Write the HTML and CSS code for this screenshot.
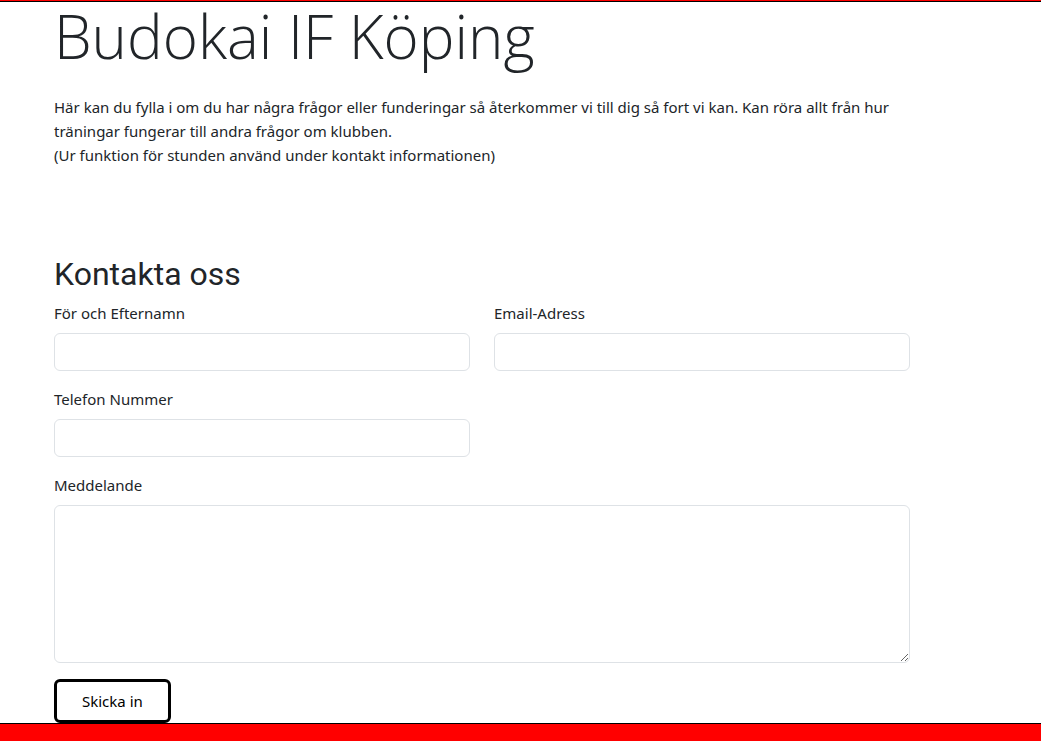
FILE: index.html
```html
<!DOCTYPE html>
<html lang="sv">
<head>
<meta charset="utf-8">
<title>Budokai IF Köping</title>
<link rel="stylesheet" href="styles.css">
</head>
<body>
<main class="page">
  <h1 class="title">Budokai IF Köping</h1>
  <p class="intro">Här kan du fylla i om du har några frågor eller funderingar så återkommer vi till dig så fort vi kan. Kan röra allt från hur träningar fungerar till andra frågor om klubben.<br>(Ur funktion för stunden använd under kontakt informationen)</p>
  <h2 class="heading">Kontakta oss</h2>
  <form class="form">
    <div class="field"><label for="name">För och Efternamn</label><input class="control" id="name" type="text"></div>
    <div class="field"><label for="email">Email-Adress</label><input class="control" id="email" type="email"></div>
    <div class="field"><label for="phone">Telefon Nummer</label><input class="control" id="phone" type="tel"></div>
    <div class="field wide"><label for="message">Meddelande</label><textarea class="control message" id="message" rows="6"></textarea></div>
    <button class="submit" type="submit">Skicka in</button>
  </form>
</main>
<footer class="footer"></footer>
</body>
</html>
```
FILE: styles.css
```css
* { box-sizing: border-box; }
body {
  margin: 0;
  min-height: 100vh;
  display: flex;
  flex-direction: column;
  border-top: 1px solid #f00;
  background: #fff;
  color: #212529;
  font: 15px/24px "Noto Sans", sans-serif;
}
.page {
  padding: 0 131px 0 54px;
  border-top: 1px solid #000;
}
.title {
  margin: 0 0 25px;
  font-family: "Open Sans", sans-serif;
  font-size: 60px;
  line-height: 68px;
  font-weight: 300;
}
.intro { margin: 0 0 88px; }
.heading {
  margin: 0 0 8px;
  font-family: Roboto, sans-serif;
  font-size: 32px;
  line-height: 38px;
  font-weight: 400;
}
.form {
  display: grid;
  grid-template-columns: 1fr 1fr;
  gap: 16px 24px;
}
.field { display: flex; flex-direction: column; gap: 8px; grid-column-start: 1; }
.field:nth-child(2) { grid-column-start: 2; grid-row: 1; }
.field.wide { grid-column: 1 / -1; }
.control {
  width: 100%;
  height: 38px;
  padding: 6px 12px;
  border: 1px solid #dee2e6;
  border-radius: 6px;
  background: #fff;
  color: inherit;
  font: inherit;
}
.message { height: 158px; resize: vertical; }
.submit {
  justify-self: start;
  padding: 7px 25px;
  border: 3px solid #000;
  border-radius: 6px;
  background: #fff;
  color: #000;
  font: inherit;
}
.footer { flex: 1; border-top: 1px solid #000; background: #f00; }
```
